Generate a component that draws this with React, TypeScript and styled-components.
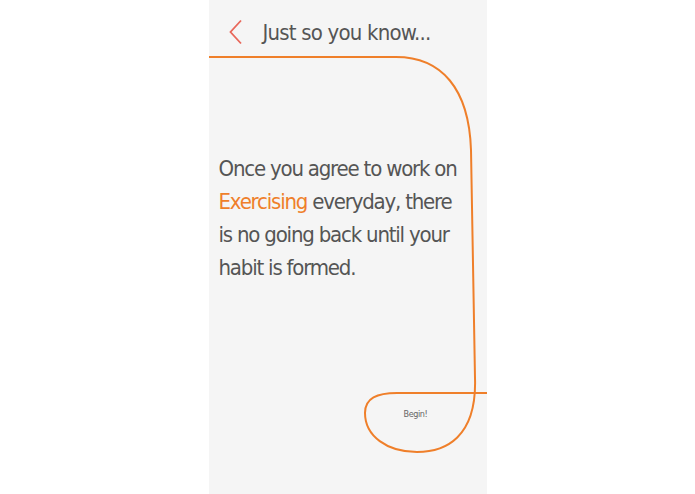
import React from 'react';
import styled, { createGlobalStyle } from 'styled-components';

const GlobalStyle = createGlobalStyle`
  html, body { margin: 0; padding: 0; background: #ffffff; }
  body { font-family: "DejaVu Sans Condensed", Roboto, sans-serif; }
`;

const Page = styled.div`
  display: flex;
  justify-content: center;
  width: 100%;
  height: 494px;
`;

const Screen = styled.div`
  position: relative;
  width: 278px;
  height: 494px;
  background: #f5f5f5;
  display: flex;
  flex-direction: column;
  overflow: hidden;
`;

const Header = styled.header`
  display: flex;
  align-items: center;
  gap: 20px;
  height: 64px;
  padding-left: 20px;
`;

const Title = styled.h1`
  margin: 0;
  font-weight: 400;
  font-size: 22px;
  color: #555555;
  letter-spacing: -0.8px;
`;

const Message = styled.p`
  margin: 88px 0 0 10px;
  font-size: 22px;
  line-height: 33px;
  color: #555555;
  letter-spacing: -1.2px;
  white-space: nowrap;
`;

const Accent = styled.span`
  color: #ef7f2a;
`;

const Begin = styled.button`
  position: absolute;
  left: 195px;
  top: 409px;
  border: 0;
  background: none;
  padding: 0;
  font-family: inherit;
  font-size: 9px;
  letter-spacing: -0.4px;
  color: #666666;
`;

const Line = styled.svg`
  position: absolute;
  inset: 0;
  pointer-events: none;
`;

const Chevron = () => (
  <svg width="14" height="26" viewBox="0 0 14 26">
    <path d="M12 1.5 L1.5 13 L12 24.5" fill="none" stroke="#e8675a" strokeWidth="1.8" />
  </svg>
);

export default function App() {
  return (
    <>
      <GlobalStyle />
      <Page>
        <Screen>
          <Line width="278" height="494" viewBox="208 0 278 494">
            <path
              d="M208,57 L395,57 C440,57 468,88 470,150 L474,378 C476,438 444,452 416,452 C386,452 364,436 364,413 C364,398 376,393 396,393 L486,393"
              fill="none"
              stroke="#ef7f2a"
              strokeWidth="2"
            />
          </Line>
          <Header>
            <Chevron />
            <Title>Just so you know...</Title>
          </Header>
          <Message>
            Once you agree to work on
            <br />
            <Accent>Exercising</Accent> everyday, there
            <br />
            is no going back until your
            <br />
            habit is formed.
          </Message>
          <Begin>Begin!</Begin>
        </Screen>
      </Page>
    </>
  );
}
